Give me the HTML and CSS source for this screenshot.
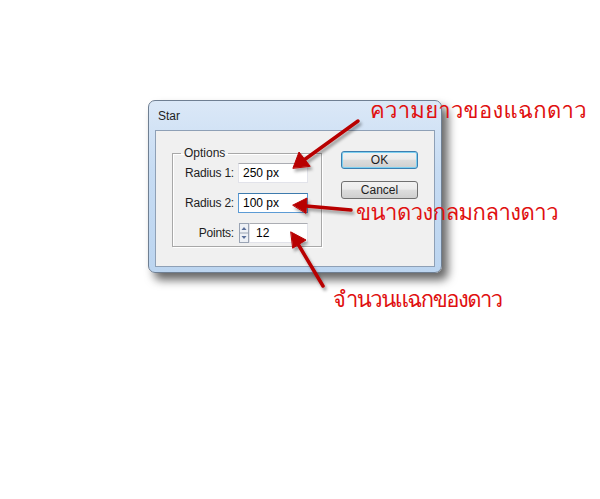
FILE: index.html
```html
<!DOCTYPE html>
<html>
<head>
<meta charset="utf-8">
<link rel="stylesheet" href="styles.css">
</head>
<body>
<div class="page">
  <div class="dialog">
    <div class="titlebar">Star</div>
    <div class="client">
      <fieldset class="group">
        <legend class="legend">Options</legend>
        <div class="row">
          <span class="lbl">Radius 1:</span>
          <span class="field">250 px</span>
        </div>
        <div class="row">
          <span class="lbl">Radius 2:</span>
          <span class="field focus">100 px</span>
        </div>
        <div class="row">
          <span class="lbl">Points:</span>
          <span class="spin">
            <svg width="10" height="20" viewBox="0 0 10 20">
              <rect x="0.5" y="0.5" width="9" height="19" fill="#eef1f6" stroke="#9aa4b4"/>
              <line x1="1" y1="10" x2="9" y2="10" stroke="#9aa4b4"/>
              <path d="M2.5 7 L5 4 L7.5 7 Z" fill="#5a6f9a"/>
              <path d="M2.5 13 L5 16 L7.5 13 Z" fill="#5a6f9a"/>
            </svg>
          </span>
          <span class="field narrow">12</span>
        </div>
      </fieldset>
      <div class="buttons">
        <div class="btn default">OK</div>
        <div class="btn">Cancel</div>
      </div>
    </div>
  </div>
  <div class="note n1">ความยาวของแฉกดาว</div>
  <div class="note n2">ขนาดวงกลมกลางดาว</div>
  <div class="note n3">จำนวนแฉกของดาว</div>
  <svg class="arrows" width="600" height="499" viewBox="0 0 600 499">
    <defs>
      <filter id="sh" x="-20%" y="-20%" width="140%" height="140%">
        <feDropShadow dx="2" dy="3" stdDeviation="1.5" flood-color="#000" flood-opacity="0.35"/>
      </filter>
    </defs>
    <g filter="url(#sh)" fill="#b80000" stroke="#b80000" stroke-width="3.5" stroke-linecap="round">
      <line x1="358" y1="121" x2="304" y2="160"/>
      <path d="M293 168 L299 152 L310 166 Z" stroke-width="1"/>
      <line x1="351" y1="210" x2="306" y2="206"/>
      <path d="M293 205 L307 198 L306 213 Z" stroke-width="1"/>
      <line x1="323" y1="286" x2="298" y2="244"/>
      <path d="M291 232 L306 240 L293 248 Z" stroke-width="1"/>
    </g>
  </svg>
</div>
</body>
</html>
```
FILE: styles.css
```css
html, body {
  margin: 0;
  padding: 0;
  background: #ffffff;
}
.page {
  position: relative;
  width: 600px;
  height: 499px;
  padding: 100px 0 0 148px;
  box-sizing: border-box;
  font-family: "Liberation Sans", Arial, sans-serif;
  font-size: 12px;
  color: #000;
}
.dialog {
  width: 294px;
  height: 173px;
  box-sizing: border-box;
  border: 1px solid #6f7f92;
  border-radius: 7px;
  background: linear-gradient(180deg, #dbe8f7 0%, #c7dcf3 40%, #bcd5f0 100%);
  box-shadow: 6px 7px 10px rgba(0, 0, 0, 0.6);
  padding: 0 6px 5px 6px;
  display: flex;
  flex-direction: column;
}
.titlebar {
  height: 29px;
  line-height: 30px;
  padding-left: 3px;
  font-size: 12px;
  color: #1e1e1e;
  flex: none;
}
.client {
  flex: 1;
  background: #f0f0f0;
  border: 1px solid #8ea0b6;
  display: flex;
  padding: 15px 0 0 16px;
}
.group {
  margin: 0;
  width: 150px;
  height: 101px;
  box-sizing: border-box;
  border: 1px solid #a8a8a8;
  box-shadow: inset 1px 1px 0 #fff, 1px 1px 0 #fff;
  padding: 3px 13px 0 0;
  display: flex;
  flex-direction: column;
  gap: 9px;
}
.legend {
  padding: 0 3px;
  margin-left: 8px;
  font-size: 12px;
  color: #1e1e1e;
}
.row {
  display: flex;
  justify-content: flex-end;
  align-items: center;
  height: 20px;
}
.row + .row {
  margin-top: 1px;
}
.lbl {
  margin-right: 4px;
  color: #1e1e1e;
  letter-spacing: -0.2px;
}
.field {
  width: 70px;
  height: 20px;
  box-sizing: border-box;
  background: #fff;
  border: 1px solid #e2e3ea;
  border-top-color: #abadb3;
  padding-left: 4px;
  line-height: 18px;
  font-size: 12px;
}
.field.focus {
  border-color: #5b9bd5;
  border-top-color: #3d7bad;
}
.field.narrow {
  width: 59px;
  padding-left: 6px;
}
.spin {
  width: 10px;
  height: 20px;
  display: flex;
  margin-left: 1px;
}
.buttons {
  margin-left: 19px;
  margin-top: 5px;
  display: flex;
  flex-direction: column;
  gap: 12px;
}
.btn {
  width: 77px;
  height: 18px;
  box-sizing: border-box;
  border: 1px solid #707070;
  border-radius: 3px;
  background: linear-gradient(180deg, #f2f2f2 0%, #ebebeb 45%, #dddddd 50%, #cfcfcf 100%);
  text-align: center;
  line-height: 16px;
  font-size: 12px;
  color: #1e1e1e;
}
.btn.default {
  border-color: #3c7fb1;
  box-shadow: inset 0 0 0 1px #7ed0f0;
}
.note {
  position: absolute;
  font-family: "Loma", "Garuda", "Tlwg Typo", "Noto Sans Thai", "DejaVu Sans", sans-serif;
  font-size: 22px;
  font-weight: 300;
  color: #e01010;
  line-height: 22px;
  white-space: nowrap;
}
.n1 { left: 370px; top: 100px; letter-spacing: 0.3px; }
.n2 { left: 356px; top: 202px; letter-spacing: -0.5px; }
.n3 { left: 333px; top: 289px; letter-spacing: -1.5px; }
.arrows {
  position: absolute;
  left: 0;
  top: 0;
  pointer-events: none;
}
```
